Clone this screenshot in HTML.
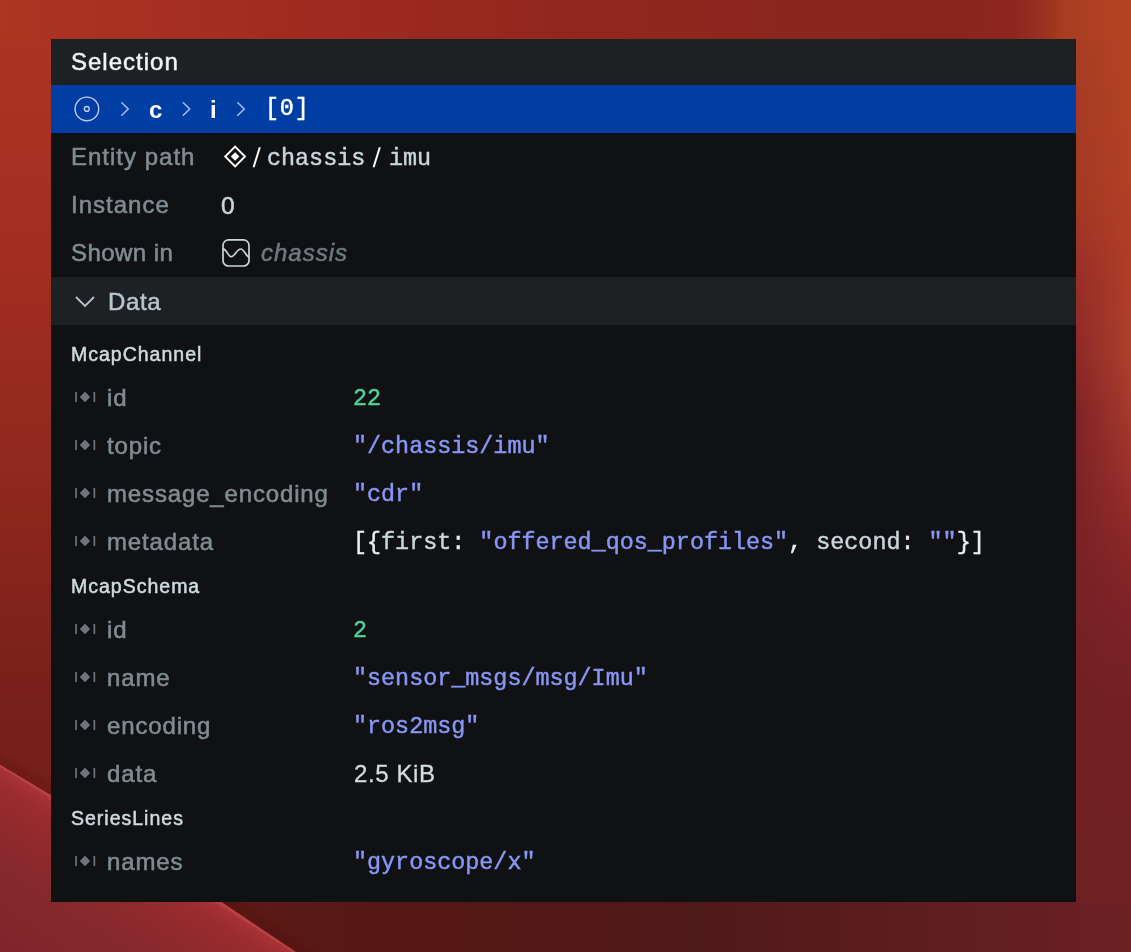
<!DOCTYPE html>
<html><head><meta charset="utf-8">
<style>
html,body{margin:0;padding:0;}
body{width:1131px;height:952px;overflow:hidden;position:relative;font-family:"Liberation Sans",sans-serif;background:#8a2a24;}
#bg{position:absolute;left:0;top:0;width:1131px;height:952px;}
#rs div{position:absolute;left:1076px;width:55px;height:6px;}
#panel{position:absolute;left:51px;top:39px;width:1025px;height:863px;background:#0f1113;overflow:hidden;}
.abs{position:absolute;white-space:pre;will-change:transform;}
.hdr{position:absolute;left:0;top:0;width:1025px;height:46px;background:#1d2124;}
.crumb{position:absolute;left:0;top:46px;width:1025px;height:48px;background:#003ea3;}
.datahdr{position:absolute;left:0;top:238px;width:1025px;height:48px;background:#1d2124;}
.sans{font-family:"Liberation Sans",sans-serif;}
.mono{font-family:"Liberation Mono",monospace;}
.row{position:absolute;left:0;width:1025px;height:48px;line-height:48px;white-space:pre;}
.row .ci{position:absolute;left:24px;top:18px;fill:#6a777c;}
.row .cl{position:absolute;left:56px;top:1px;font-size:24px;letter-spacing:0.85px;color:#7f8c91;-webkit-text-stroke:0.55px #7f8c91;}
.row .cv{position:absolute;left:302px;top:2px;font-size:23.4px;-webkit-text-stroke:0.45px currentColor;}
.row .cv.sans{font-size:24px;letter-spacing:0.6px;top:1px;left:303px;-webkit-text-stroke:0.3px currentColor;}
.str{color:#8996f6;}
.num{color:#50d49a;}
.br{color:#e9edef;}
.fld{color:#c9d6db;}
.sz{color:#d3dde1;}
.arch{will-change:transform;position:absolute;left:20px;height:40px;line-height:40px;font-size:19.5px;letter-spacing:1px;color:#d0dbdf;white-space:pre;-webkit-text-stroke:0.5px #d0dbdf;}
.trow{position:absolute;left:0;width:1025px;height:48px;line-height:48px;white-space:pre;}
.trow .tl{position:absolute;left:20px;top:0;font-size:24px;letter-spacing:1px;color:#7f8c91;-webkit-text-stroke:0.55px #7f8c91;}
</style></head><body>
<svg id="bg" width="1131" height="952" viewBox="0 0 1131 952">
  <defs>
    <linearGradient id="gTop" gradientUnits="userSpaceOnUse" x1="0" y1="0" x2="1131" y2="0">
      <stop offset="0" stop-color="#ae3423"/>
      <stop offset="0.248" stop-color="#a02c20"/>
      <stop offset="0.495" stop-color="#93271d"/>
      <stop offset="0.707" stop-color="#8a261e"/>
      <stop offset="0.84" stop-color="#8a251e"/>
      <stop offset="0.895" stop-color="#8c261e"/>
      <stop offset="0.92" stop-color="#99301f"/>
      <stop offset="0.94" stop-color="#a83c21"/>
      <stop offset="0.965" stop-color="#ae4122"/>
      <stop offset="1" stop-color="#b04422"/>
    </linearGradient>
    <linearGradient id="gLeft" gradientUnits="userSpaceOnUse" x1="0" y1="0" x2="0" y2="952">
      <stop offset="0" stop-color="#ae3423"/>
      <stop offset="0.263" stop-color="#a22e21"/>
      <stop offset="0.473" stop-color="#92291e"/>
      <stop offset="0.735" stop-color="#78201a"/>
      <stop offset="1" stop-color="#70201a"/>
    </linearGradient>
    
    <linearGradient id="gBot" gradientUnits="userSpaceOnUse" x1="0" y1="0" x2="1131" y2="0">
      <stop offset="0.18" stop-color="#5c1a15"/>
      <stop offset="0.354" stop-color="#561813"/>
      <stop offset="0.62" stop-color="#50191a"/>
      <stop offset="1" stop-color="#6c2123"/>
    </linearGradient>
    <linearGradient id="gSw" gradientUnits="userSpaceOnUse" x1="0" y1="765" x2="-80.1" y2="891.75">
      <stop offset="0" stop-color="#b53e42"/>
      <stop offset="0.02" stop-color="#a63236"/>
      <stop offset="0.113" stop-color="#9b2c2e"/>
      <stop offset="0.333" stop-color="#8f2a2d"/>
      <stop offset="0.6" stop-color="#85282c"/>
      <stop offset="1" stop-color="#80262a"/>
    </linearGradient>
    
    <filter id="fBl" filterUnits="userSpaceOnUse" x="-50" y="700" width="420" height="300"><feGaussianBlur stdDeviation="4"/></filter>
    <filter id="fBl2" filterUnits="userSpaceOnUse" x="-50" y="700" width="420" height="300"><feGaussianBlur stdDeviation="0.6"/></filter>
  </defs>
  <rect x="0" y="0" width="1131" height="952" fill="url(#gLeft)"/>
  <rect x="0" y="0" width="1131" height="39" fill="url(#gTop)"/>
  <rect x="0" y="902" width="1131" height="50" fill="url(#gBot)"/>
  <path d="M-15 752 Q120 831 221 897 L320 962" fill="none" stroke="#4a120e" stroke-opacity="0.22" stroke-width="10" filter="url(#fBl)"/>
  <path d="M-5 762 Q120 836 221 902 L300 955 L-5 955Z" fill="url(#gSw)"/>
  <path d="M-5 762.6 Q120 836.6 221 902.6 L300 955.6" fill="none" stroke="#cf4a50" stroke-opacity="0.55" stroke-width="1.6" filter="url(#fBl2)"/>
</svg>
<div id="rs"><div style="top:39px;background:linear-gradient(90deg,#aa3d22,#b04422)"></div><div style="top:45px;background:linear-gradient(90deg,#aa3d22,#b04422)"></div><div style="top:51px;background:linear-gradient(90deg,#a93c22,#b04422)"></div><div style="top:57px;background:linear-gradient(90deg,#a93c22,#b04422)"></div><div style="top:63px;background:linear-gradient(90deg,#a93c22,#b04422)"></div><div style="top:69px;background:linear-gradient(90deg,#a83b22,#b04422)"></div><div style="top:75px;background:linear-gradient(90deg,#a83b22,#b04422)"></div><div style="top:81px;background:linear-gradient(90deg,#a83b22,#b04422)"></div><div style="top:87px;background:linear-gradient(90deg,#a73a22,#b04422)"></div><div style="top:93px;background:linear-gradient(90deg,#a73a22,#b04422)"></div><div style="top:99px;background:linear-gradient(90deg,#a73a22,#b04422)"></div><div style="top:105px;background:linear-gradient(90deg,#a73a22,#b04422)"></div><div style="top:111px;background:linear-gradient(90deg,#a73a22,#b04322)"></div><div style="top:117px;background:linear-gradient(90deg,#a63a23,#b04323)"></div><div style="top:123px;background:linear-gradient(90deg,#a63923,#b04323)"></div><div style="top:129px;background:linear-gradient(90deg,#a63923,#b04323)"></div><div style="top:135px;background:linear-gradient(90deg,#a63923,#af4223)"></div><div style="top:141px;background:linear-gradient(90deg,#a63923,#af4223)"></div><div style="top:147px;background:linear-gradient(90deg,#a63924,#af4223)"></div><div style="top:153px;background:linear-gradient(90deg,#a53924,#af4223)"></div><div style="top:159px;background:linear-gradient(90deg,#a53924,#af4224)"></div><div style="top:165px;background:linear-gradient(90deg,#a53924,#af4124)"></div><div style="top:171px;background:linear-gradient(90deg,#a53924,#af4124)"></div><div style="top:177px;background:linear-gradient(90deg,#a53824,#af4124)"></div><div style="top:183px;background:linear-gradient(90deg,#a43825,#af4124)"></div><div style="top:189px;background:linear-gradient(90deg,#a43825,#af4024)"></div><div style="top:195px;background:linear-gradient(90deg,#a43825,#af4025)"></div><div style="top:201px;background:linear-gradient(90deg,#a33725,#af4025)"></div><div style="top:207px;background:linear-gradient(90deg,#a23725,#af4025)"></div><div style="top:213px;background:linear-gradient(90deg,#a23625,#ae3f25)"></div><div style="top:219px;background:linear-gradient(90deg,#a13525,#ae3f25)"></div><div style="top:225px;background:linear-gradient(90deg,#a03426,#ae3f25)"></div><div style="top:231px;background:linear-gradient(90deg,#9f3326,#ae3f26)"></div><div style="top:237px;background:linear-gradient(90deg,#9e3326,#ae3e26)"></div><div style="top:243px;background:linear-gradient(90deg,#9d3226,#ae3e26)"></div><div style="top:249px;background:linear-gradient(90deg,#9c3126,#ae3e26)"></div><div style="top:255px;background:linear-gradient(90deg,#9b3026,#ae3e26)"></div><div style="top:261px;background:linear-gradient(90deg,#9a2f26,#ae3e27)"></div><div style="top:267px;background:linear-gradient(90deg,#992f27,#ae3e27)"></div><div style="top:273px;background:linear-gradient(90deg,#982e27,#ae3e28)"></div><div style="top:279px;background:linear-gradient(90deg,#972d27,#ae3e28)"></div><div style="top:285px;background:linear-gradient(90deg,#962c27,#ae3e28)"></div><div style="top:291px;background:linear-gradient(90deg,#952c27,#ae3e29)"></div><div style="top:297px;background:linear-gradient(90deg,#942c27,#ae3e29)"></div><div style="top:303px;background:linear-gradient(90deg,#932b27,#ae3f29)"></div><div style="top:309px;background:linear-gradient(90deg,#922b27,#ae3f2a)"></div><div style="top:315px;background:linear-gradient(90deg,#912b27,#ae3f2a)"></div><div style="top:321px;background:linear-gradient(90deg,#902b28,#ae3f2a)"></div><div style="top:327px;background:linear-gradient(90deg,#8f2b28,#ae3f2b)"></div><div style="top:333px;background:linear-gradient(90deg,#8e2a28,#ae3f2b)"></div><div style="top:339px;background:linear-gradient(90deg,#8d2a28,#ae3f2c)"></div><div style="top:345px;background:linear-gradient(90deg,#8c2a28,#ae3f2c)"></div><div style="top:351px;background:linear-gradient(90deg,#8b2a28,#ad3f2c)"></div><div style="top:357px;background:linear-gradient(90deg,#8a2928,#ad3e2c)"></div><div style="top:363px;background:linear-gradient(90deg,#892827,#ac3e2c)"></div><div style="top:369px;background:linear-gradient(90deg,#882727,#ab3d2c)"></div><div style="top:375px;background:linear-gradient(90deg,#862727,#aa3d2c)"></div><div style="top:381px;background:linear-gradient(90deg,#852627,#a93c2c)"></div><div style="top:387px;background:linear-gradient(90deg,#842527,#a93c2c)"></div><div style="top:393px;background:linear-gradient(90deg,#832526,#a83b2c)"></div><div style="top:399px;background:linear-gradient(90deg,#822426,#a73b2c)"></div><div style="top:405px;background:linear-gradient(90deg,#802326,#a63a2c)"></div><div style="top:411px;background:linear-gradient(90deg,#802326,#a5392c)"></div><div style="top:417px;background:linear-gradient(90deg,#7f2326,#a4392c)"></div><div style="top:423px;background:linear-gradient(90deg,#7f2326,#a3382c)"></div><div style="top:429px;background:linear-gradient(90deg,#7f2326,#a2372c)"></div><div style="top:435px;background:linear-gradient(90deg,#7e2326,#a1362c)"></div><div style="top:441px;background:linear-gradient(90deg,#7e2326,#a0352c)"></div><div style="top:447px;background:linear-gradient(90deg,#7e2326,#9f342b)"></div><div style="top:453px;background:linear-gradient(90deg,#7d2326,#9e332b)"></div><div style="top:459px;background:linear-gradient(90deg,#7d2326,#9d332b)"></div><div style="top:465px;background:linear-gradient(90deg,#7d2326,#9c322b)"></div><div style="top:471px;background:linear-gradient(90deg,#7c2326,#9b312b)"></div><div style="top:477px;background:linear-gradient(90deg,#7c2226,#9a302b)"></div><div style="top:483px;background:linear-gradient(90deg,#7c2226,#992f2b)"></div><div style="top:489px;background:linear-gradient(90deg,#7b2226,#972e2a)"></div><div style="top:495px;background:linear-gradient(90deg,#7b2226,#962d2a)"></div><div style="top:501px;background:linear-gradient(90deg,#7b2226,#952d29)"></div><div style="top:507px;background:linear-gradient(90deg,#7a2226,#932c29)"></div><div style="top:513px;background:linear-gradient(90deg,#7a2226,#922b28)"></div><div style="top:519px;background:linear-gradient(90deg,#7a2226,#902a28)"></div><div style="top:525px;background:linear-gradient(90deg,#792226,#8f2928)"></div><div style="top:531px;background:linear-gradient(90deg,#792226,#8e2827)"></div><div style="top:537px;background:linear-gradient(90deg,#792226,#8c2727)"></div><div style="top:543px;background:linear-gradient(90deg,#782226,#8b2726)"></div><div style="top:549px;background:linear-gradient(90deg,#782226,#8a2626)"></div><div style="top:555px;background:linear-gradient(90deg,#782226,#882626)"></div><div style="top:561px;background:linear-gradient(90deg,#772226,#872526)"></div><div style="top:567px;background:linear-gradient(90deg,#772226,#862526)"></div><div style="top:573px;background:linear-gradient(90deg,#772225,#852526)"></div><div style="top:579px;background:linear-gradient(90deg,#772225,#842426)"></div><div style="top:585px;background:linear-gradient(90deg,#762125,#822427)"></div><div style="top:591px;background:linear-gradient(90deg,#762125,#812327)"></div><div style="top:597px;background:linear-gradient(90deg,#762125,#802327)"></div><div style="top:603px;background:linear-gradient(90deg,#762125,#7f2327)"></div><div style="top:609px;background:linear-gradient(90deg,#762125,#7e2227)"></div><div style="top:615px;background:linear-gradient(90deg,#752125,#7c2227)"></div><div style="top:621px;background:linear-gradient(90deg,#752125,#7c2227)"></div><div style="top:627px;background:linear-gradient(90deg,#752124,#7b2226)"></div><div style="top:633px;background:linear-gradient(90deg,#752124,#7a2226)"></div><div style="top:639px;background:linear-gradient(90deg,#742124,#7a2126)"></div><div style="top:645px;background:linear-gradient(90deg,#742124,#792126)"></div><div style="top:651px;background:linear-gradient(90deg,#742124,#792125)"></div><div style="top:657px;background:linear-gradient(90deg,#742124,#782125)"></div><div style="top:663px;background:linear-gradient(90deg,#732024,#772125)"></div><div style="top:669px;background:linear-gradient(90deg,#732024,#772124)"></div><div style="top:675px;background:linear-gradient(90deg,#732023,#762124)"></div><div style="top:681px;background:linear-gradient(90deg,#732023,#762024)"></div><div style="top:687px;background:linear-gradient(90deg,#722023,#752024)"></div><div style="top:693px;background:linear-gradient(90deg,#722023,#742023)"></div><div style="top:699px;background:linear-gradient(90deg,#722023,#742023)"></div><div style="top:705px;background:linear-gradient(90deg,#722023,#742023)"></div><div style="top:711px;background:linear-gradient(90deg,#722023,#742023)"></div><div style="top:717px;background:linear-gradient(90deg,#712023,#732023)"></div><div style="top:723px;background:linear-gradient(90deg,#712023,#732023)"></div><div style="top:729px;background:linear-gradient(90deg,#712023,#732023)"></div><div style="top:735px;background:linear-gradient(90deg,#712023,#732023)"></div><div style="top:741px;background:linear-gradient(90deg,#712023,#732023)"></div><div style="top:747px;background:linear-gradient(90deg,#712023,#722023)"></div><div style="top:753px;background:linear-gradient(90deg,#712023,#722023)"></div><div style="top:759px;background:linear-gradient(90deg,#702023,#722023)"></div><div style="top:765px;background:linear-gradient(90deg,#702023,#722023)"></div><div style="top:771px;background:linear-gradient(90deg,#702023,#712023)"></div><div style="top:777px;background:linear-gradient(90deg,#702023,#712023)"></div><div style="top:783px;background:linear-gradient(90deg,#702023,#712023)"></div><div style="top:789px;background:linear-gradient(90deg,#702023,#712023)"></div><div style="top:795px;background:linear-gradient(90deg,#6f2023,#712023)"></div><div style="top:801px;background:linear-gradient(90deg,#6f2023,#702023)"></div><div style="top:807px;background:linear-gradient(90deg,#6f2023,#702023)"></div><div style="top:813px;background:linear-gradient(90deg,#6f2023,#702023)"></div><div style="top:819px;background:linear-gradient(90deg,#6f2123,#702123)"></div><div style="top:825px;background:linear-gradient(90deg,#6f2123,#702123)"></div><div style="top:831px;background:linear-gradient(90deg,#6f2123,#6f2123)"></div><div style="top:837px;background:linear-gradient(90deg,#6e2123,#6f2123)"></div><div style="top:843px;background:linear-gradient(90deg,#6e2123,#6f2123)"></div><div style="top:849px;background:linear-gradient(90deg,#6e2123,#6f2123)"></div><div style="top:855px;background:linear-gradient(90deg,#6e2123,#6f2123)"></div><div style="top:861px;background:linear-gradient(90deg,#6e2123,#6e2123)"></div><div style="top:867px;background:linear-gradient(90deg,#6e2123,#6e2123)"></div><div style="top:873px;background:linear-gradient(90deg,#6e2123,#6e2123)"></div><div style="top:879px;background:linear-gradient(90deg,#6d2123,#6e2123)"></div><div style="top:885px;background:linear-gradient(90deg,#6d2123,#6e2123)"></div><div style="top:891px;background:linear-gradient(90deg,#6d2123,#6d2123)"></div><div style="top:897px;background:linear-gradient(90deg,#6d2123,#6d2123)"></div></div>
<div id="panel">
  <div class="hdr"></div>
  <div class="abs" style="left:20px;top:0;height:46px;line-height:46px;font-size:24px;letter-spacing:1px;color:#f2f4f5;-webkit-text-stroke:0.5px #f2f4f5;">Selection</div>
  <div class="crumb"></div>
  <svg class="abs" style="left:0;top:46px" width="320" height="48" viewBox="0 0 320 48">
    <g fill="none" stroke="#c3cdf5" stroke-width="1.4">
      <circle cx="35.9" cy="23.9" r="11.8"/>
      <circle cx="35.8" cy="23.9" r="2.4"/>
    </g>
    <g fill="none" stroke="#a9b8f0" stroke-width="1.6" stroke-linecap="round">
      <path d="M70.8 17.8 L77.2 24 L70.8 30.2"/>
      <path d="M132.3 17.8 L138.7 24 L132.3 30.2"/>
      <path d="M186.8 17.8 L193.2 24 L186.8 30.2"/>
    </g>
  </svg>
  <div class="abs" style="left:98px;top:47px;height:48px;line-height:48px;font-size:24px;font-weight:bold;color:#ffffff;">c</div>
  <div class="abs" style="left:159px;top:47px;height:48px;line-height:48px;font-size:24px;font-weight:bold;color:#ffffff;">i</div>
  <div class="abs mono" style="left:214px;top:46px;height:48px;line-height:48px;font-size:23.4px;letter-spacing:0.8px;color:#ffffff;-webkit-text-stroke:0.5px #fff;">[0]</div>

  <div class="trow" style="top:94px"><span class="tl">Entity path</span>
    <svg class="abs" style="left:170px;top:6px" width="30" height="30" viewBox="0 0 30 30">
      <path d="M14.1 7.6 L24 17.5 L14.1 27.4 L4.2 17.5Z" fill="none" stroke="#ffffff" stroke-width="1.9"/>
      <path d="M14.1 13.2 L18.4 17.5 L14.1 21.8 L9.8 17.5Z" fill="#ffffff"/>
    </svg>
    <svg class="abs" style="left:195px;top:0" width="140" height="48" viewBox="0 0 140 48"><g stroke="#ffffff" stroke-width="2" stroke-linecap="butt"><path d="M7.6 34.2 L13.8 14.2"/><path d="M127.6 34.2 L133.8 14.2"/></g></svg>
    <span class="abs mono" style="left:216px;top:2px;font-size:23.4px;color:#c9d6db;-webkit-text-stroke:0.45px #c9d6db;">chassis</span>
    <span class="abs mono" style="left:338px;top:2px;font-size:23.4px;color:#c9d6db;-webkit-text-stroke:0.45px #c9d6db;">imu</span>
  </div>
  <div class="trow" style="top:142px"><span class="tl">Instance</span>
    <span class="abs sans" style="left:170px;top:1px;font-size:24.5px;color:#cad6db;-webkit-text-stroke:0.5px #cad6db;">0</span>
  </div>
  <div class="trow" style="top:190px"><span class="tl" style="letter-spacing:0.45px">Shown in</span>
    <svg class="abs" style="left:168px;top:8px" width="34" height="34" viewBox="0 0 34 34">
      <rect x="4" y="2.9" width="26" height="26.1" rx="5.5" fill="none" stroke="#c9d6db" stroke-width="1.7"/>
      <path d="M4 11.8 C7.5 11.8 9 19.7 12.2 19.7 C15.5 19.7 18 12 21.7 12 C25.5 12 27 19.9 30 19.9" fill="none" stroke="#c9d6db" stroke-width="1.7"/>
    </svg>
    <span class="abs sans" style="left:210px;top:0;font-size:24px;font-style:italic;letter-spacing:1px;color:#6f7b80;-webkit-text-stroke:0.5px #6f7b80;">chassis</span>
  </div>

  <div class="datahdr"></div>
  <svg class="abs" style="left:0;top:238px" width="60" height="48" viewBox="0 0 60 48">
    <path d="M25 20 L34 29 L43 20" fill="none" stroke="#b5c4ca" stroke-width="1.8"/>
  </svg>
  <div class="abs" style="left:57px;top:239px;height:48px;line-height:48px;font-size:24px;letter-spacing:0.6px;color:#b8c7cd;-webkit-text-stroke:0.5px #b8c7cd;">Data</div>

<div class="arch" style="top:295px">McapChannel</div>
<div class="row" style="top:334px"><svg class="ci" width="24" height="12" viewBox="0 0 24 12"><rect x="0.2" y="1" width="1.7" height="10"/><path d="M10 0.8 L15.2 6 L10 11.2 L4.8 6Z"/><rect x="18.5" y="1" width="1.7" height="10"/></svg><span class="cl">id</span><span class="cv mono"><span class="num">22</span></span></div>
<div class="row" style="top:382px"><svg class="ci" width="24" height="12" viewBox="0 0 24 12"><rect x="0.2" y="1" width="1.7" height="10"/><path d="M10 0.8 L15.2 6 L10 11.2 L4.8 6Z"/><rect x="18.5" y="1" width="1.7" height="10"/></svg><span class="cl">topic</span><span class="cv mono"><span class="str">"/chassis/imu"</span></span></div>
<div class="row" style="top:430px"><svg class="ci" width="24" height="12" viewBox="0 0 24 12"><rect x="0.2" y="1" width="1.7" height="10"/><path d="M10 0.8 L15.2 6 L10 11.2 L4.8 6Z"/><rect x="18.5" y="1" width="1.7" height="10"/></svg><span class="cl">message_encoding</span><span class="cv mono"><span class="str">"cdr"</span></span></div>
<div class="row" style="top:478px"><svg class="ci" width="24" height="12" viewBox="0 0 24 12"><rect x="0.2" y="1" width="1.7" height="10"/><path d="M10 0.8 L15.2 6 L10 11.2 L4.8 6Z"/><rect x="18.5" y="1" width="1.7" height="10"/></svg><span class="cl">metadata</span><span class="cv mono"><span class="br">[{</span><span class="fld">first</span><span class="br">: </span><span class="str">"offered_qos_profiles"</span><span class="br">, </span><span class="fld">second</span><span class="br">: </span><span class="str">""</span><span class="br">}]</span></span></div>
<div class="arch" style="top:527px">McapSchema</div>
<div class="row" style="top:566px"><svg class="ci" width="24" height="12" viewBox="0 0 24 12"><rect x="0.2" y="1" width="1.7" height="10"/><path d="M10 0.8 L15.2 6 L10 11.2 L4.8 6Z"/><rect x="18.5" y="1" width="1.7" height="10"/></svg><span class="cl">id</span><span class="cv mono"><span class="num">2</span></span></div>
<div class="row" style="top:614px"><svg class="ci" width="24" height="12" viewBox="0 0 24 12"><rect x="0.2" y="1" width="1.7" height="10"/><path d="M10 0.8 L15.2 6 L10 11.2 L4.8 6Z"/><rect x="18.5" y="1" width="1.7" height="10"/></svg><span class="cl">name</span><span class="cv mono"><span class="str">"sensor_msgs/msg/Imu"</span></span></div>
<div class="row" style="top:662px"><svg class="ci" width="24" height="12" viewBox="0 0 24 12"><rect x="0.2" y="1" width="1.7" height="10"/><path d="M10 0.8 L15.2 6 L10 11.2 L4.8 6Z"/><rect x="18.5" y="1" width="1.7" height="10"/></svg><span class="cl">encoding</span><span class="cv mono"><span class="str">"ros2msg"</span></span></div>
<div class="row" style="top:710px"><svg class="ci" width="24" height="12" viewBox="0 0 24 12"><rect x="0.2" y="1" width="1.7" height="10"/><path d="M10 0.8 L15.2 6 L10 11.2 L4.8 6Z"/><rect x="18.5" y="1" width="1.7" height="10"/></svg><span class="cl">data</span><span class="cv sans"><span class="sz">2.5 KiB</span></span></div>
<div class="arch" style="top:759px">SeriesLines</div>
<div class="row" style="top:798px"><svg class="ci" width="24" height="12" viewBox="0 0 24 12"><rect x="0.2" y="1" width="1.7" height="10"/><path d="M10 0.8 L15.2 6 L10 11.2 L4.8 6Z"/><rect x="18.5" y="1" width="1.7" height="10"/></svg><span class="cl">names</span><span class="cv mono"><span class="str">"gyroscope/x"</span></span></div>
</div>
</body></html>
